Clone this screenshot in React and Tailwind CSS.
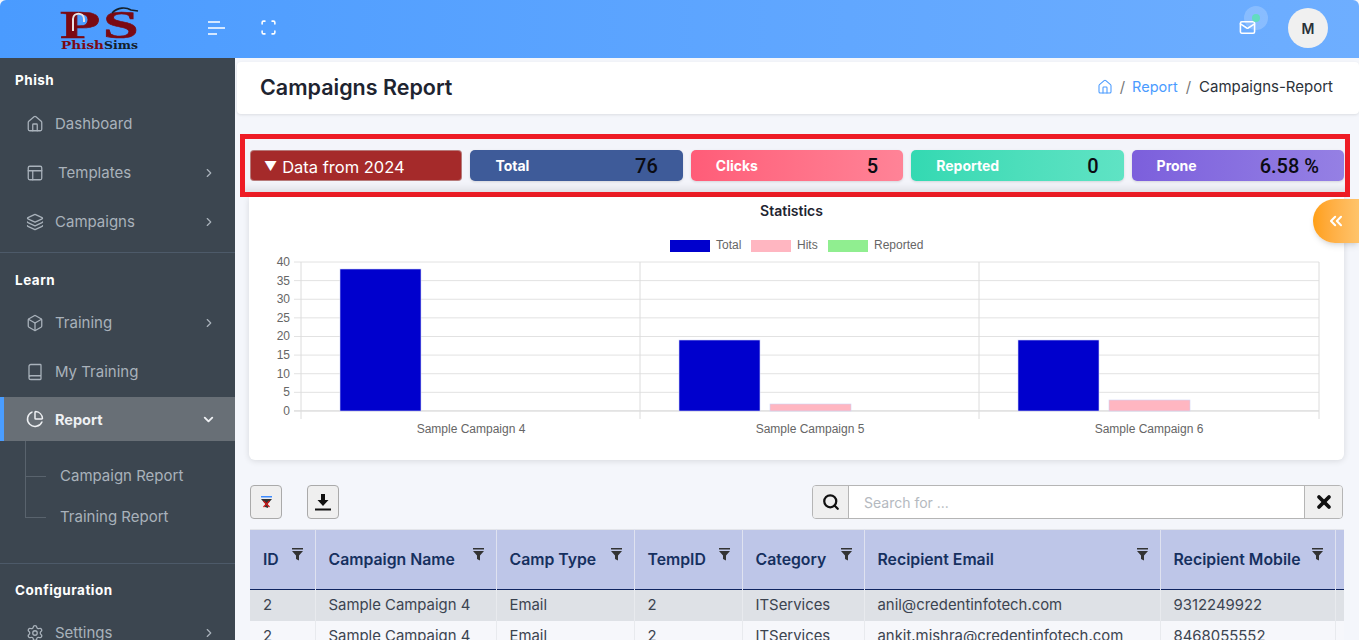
import {
  Home,
  PanelsTopLeft,
  Layers,
  Box,
  Book,
  ChartPie,
  ChevronRight,
  ChevronDown,
  Settings,
  Mail,
  Scan,
  Search,
  X,
  ChevronsLeft,
} from 'lucide-react';

const font = "font-['Inter','Noto_Sans',sans-serif]";

const rows = [
  ['2', 'Sample Campaign 4', 'Email', '2', 'ITServices', 'anil@credentinfotech.com', '9312249922'],
  ['2', 'Sample Campaign 4', 'Email', '2', 'ITServices', 'ankit.mishra@credentinfotech.com', '8468055552'],
];

const columns = [
  ['ID', 'w-[65px]'],
  ['Campaign Name', 'w-[181px]'],
  ['Camp Type', 'w-[138px]'],
  ['TempID', 'w-[108px]'],
  ['Category', 'w-[122px]'],
  ['Recipient Email', 'w-[296px]'],
  ['Recipient Mobile', 'w-[175px]'],
];

const FilterIcon = () => (
  <svg width="11" height="13" viewBox="0 0 11 13" className="absolute right-[12px] top-[18px]">
    <rect x="0" y="0" width="11" height="1.5" fill="#333" />
    <path d="M0 3h11L7 7.500V12.500L4 11V7.500Z" fill="#333" />
  </svg>
);

const Logo = () => (
  <svg width="80" height="44" viewBox="0 0 80 44">
    <text transform="translate(0 31) scale(1.65 1)" fontFamily="Liberation Serif" fontWeight="700" fontSize="40" fill="#7b0a12" stroke="#7b0a12" strokeWidth="0.6">P</text>
    <text transform="translate(43 31) scale(1.6 1)" fontFamily="Liberation Serif" fontWeight="700" fontSize="40" fill="#7b0a12" stroke="#7b0a12" strokeWidth="0.6">S</text>
    <path d="M13 24V12c0-7 11-7 11 0v3" fill="none" stroke="#e9e4e4" strokeWidth="2" />
    <path d="M52 6c6-6 14-6 19-3l7 1" fill="none" stroke="#14202c" strokeWidth="1.600" />
    <text x="1" y="42" fontFamily="DejaVu Serif" fontWeight="700" fontSize="11" fill="#7b0a12" textLength="43" lengthAdjust="spacingAndGlyphs">Phish</text>
    <text x="44" y="42" fontFamily="DejaVu Serif" fontWeight="700" fontSize="11" fill="#14202c" textLength="34" lengthAdjust="spacingAndGlyphs">Sims</text>
  </svg>
);

const SideLabel = ({ children, className }) => (
  <div className={`h-[20px] pl-[15px] text-[13.5px] leading-[20px] font-bold tracking-[0.5px] text-white ${className}`}>{children}</div>
);

const SideItem = ({ icon: Icon, label, arrow, indent }) => (
  <div className="flex h-[49px] items-center pl-[26px] pr-[19px] text-[#a9b2bb]">
    <Icon size={18} strokeWidth={1.7} className="shrink-0" />
    <span className={`${indent ? 'ml-[14px]' : 'ml-[11px]'} pt-[1px] text-[15px]`}>{label}</span>
    {arrow && <ChevronRight size={14} className="ml-auto" />}
  </div>
);

const Sidebar = () => (
  <aside className="h-[582px] w-[235px] shrink-0 overflow-hidden bg-[#3c4650]">
    <div className="pt-[12px]">
      <SideLabel className="mb-[9px]">Phish</SideLabel>
      <SideItem icon={Home} label="Dashboard" />
      <SideItem icon={PanelsTopLeft} label="Templates" arrow indent />
      <SideItem icon={Layers} label="Campaigns" arrow />
    </div>
    <div className="mt-[6px] border-t border-[#4d5a69] pt-[17px]">
      <SideLabel className="mb-[8px]">Learn</SideLabel>
      <SideItem icon={Box} label="Training" arrow />
      <SideItem icon={Book} label="My Training" />
      <div className="mt-[1px] flex h-[44px] items-center border-l-4 border-[#4a9dff] bg-[#686f76] pl-[22px] pr-[19px] text-[#eef0f3]">
        <ChartPie size={18} strokeWidth={2} />
        <span className="ml-[11px] pt-[2px] text-[14.5px] font-bold">Report</span>
        <ChevronDown size={15} strokeWidth={3} className="ml-auto" />
      </div>
      <div className="relative h-[122px] pt-[15px] text-[15px] text-[#a9b2bb]">
        <span className="absolute left-[25px] top-0 h-[76px] w-[1px] bg-[#59636d]" />
        <span className="absolute left-[25px] top-[35px] h-[1px] w-[21px] bg-[#59636d]" />
        <span className="absolute left-[25px] top-[76px] h-[1px] w-[21px] bg-[#59636d]" />
        <div className="flex h-[41px] items-center pl-[60px]">Campaign Report</div>
        <div className="flex h-[41px] items-center pl-[60px]">Training Report</div>
      </div>
    </div>
    <div className="border-t border-[#4d5a69] pt-[16px]">
      <SideLabel className="mb-[8px]">Configuration</SideLabel>
      <SideItem icon={Settings} label="Settings" arrow />
    </div>
  </aside>
);

const Topbar = () => (
  <header className="flex h-[58px] items-center overflow-hidden rounded-t-[6px] bg-gradient-to-r from-[#4a9bff] to-[#6eaeff]">
    <div className="ml-[60px] flex h-[58px] w-[80px] items-center">
      <Logo />
    </div>
    <svg width="18" height="14" viewBox="0 0 18 14" className="mb-[2px] ml-[68px]" fill="none" stroke="#fff" strokeWidth="1.600">
      <path d="M0 1h12M0 7h17M0 13h9" />
    </svg>
    <Scan size={17} color="#fff" strokeWidth={2.2} className="mb-[3px] ml-[34px]" />
    <div className="relative mb-[2px] ml-auto mr-[31px] flex items-start">
      <span className="absolute left-[5px] top-[-2px] h-[24px] w-[24px] rounded-full bg-white/20" />
      <span className="absolute left-[13px] top-[6px] h-[8px] w-[8px] rounded-full bg-[#62dcc0]" />
      <Mail size={17} color="#fff" strokeWidth={2.2} className="mt-[11px]" />
      <div className="ml-[32px] flex h-[40px] w-[40px] items-center justify-center rounded-full bg-[#f0f0f0] text-[14px] font-semibold text-[#2a3038]">M</div>
    </div>
  </header>
);

const Stat = ({ label, value, gradient }) => (
  <div className={`flex h-[31px] items-center justify-between rounded-[5px] pl-[25px] pr-[25px] shadow-sm ${gradient}`}>
    <span className="text-[14px] font-bold text-white">{label}</span>
    <span className="font-['Roboto',sans-serif] text-[20px] font-medium text-[#0b0b12]">{value}</span>
  </div>
);

const StatsBar = () => (
  <div className="h-[63px] border-[5px] border-[#ee1c25] bg-[#f3f4fa] pl-[5px] pr-[1px] pt-[11px] shadow-[inset_0_-10px_10px_-8px_rgba(0,0,0,0.12)]">
    <div className="grid grid-cols-5 gap-[8px]">
      <div className="flex h-[31px] items-center rounded-[4px] border border-[#c9c9c9]/50 bg-[#a52a2a] pl-[13px] pt-[3px] text-[16.5px] text-white">
        <span className="mr-[5px] text-[13px]">▼</span>Data from 2024
      </div>
      <Stat label="Total" value="76" gradient="bg-[#3e5b99]" />
      <Stat label="Clicks" value="5" gradient="bg-gradient-to-r from-[#ff5c78] to-[#ff8397]" />
      <Stat label="Reported" value="0" gradient="bg-gradient-to-r from-[#33d9b2] to-[#5fe3c4]" />
      <Stat label="Prone" value="6.58 %" gradient="bg-gradient-to-r from-[#7c5fdc] to-[#9580e4]" />
    </div>
  </div>
);

const ChartBar = ({ x, top, fill }) => (
  <rect x={x} y={top} width="81" height={411 - top} fill={fill} stroke="#cfd3f5" strokeWidth="0.6" />
);

const Chart = () => {
  const ticks = [40, 35, 30, 25, 20, 15, 10, 5, 0];
  return (
    <div className="ml-[9px] mr-[6px] h-[263px] rounded-b-[6px] bg-white shadow-[0_1px_6px_rgba(0,0,0,0.12)]">
      <div className="h-[25px] pr-[10px] pt-[4px] text-center text-[14px] font-semibold leading-[20px] text-[#1e2430]">Statistics</div>
      <svg width="1095" height="238" viewBox="249 222 1095 238" className="block">
        <g fontFamily="Liberation Sans" fontSize="12" fill="#666">
          <rect x="670" y="240" width="40" height="12" fill="#0000cd" />
          <text x="716" y="249">Total</text>
          <rect x="751" y="240" width="40" height="12" fill="#ffb6c1" />
          <text x="797" y="249">Hits</text>
          <rect x="828" y="240" width="40" height="12" fill="#90ee90" />
          <text x="874" y="249">Reported</text>
          {ticks.map((t, i) => {
            const y = 262 + i * 18.62;
            return (
              <g key={t}>
                <line x1="294" x2="1319" y1={y} y2={y} stroke={t === 0 ? '#ccc' : '#e2e2e2'} />
                <text x="290" y={y + 4} textAnchor="end" fontSize="12">{t}</text>
              </g>
            );
          })}
          {[301, 640, 979, 1319].map((x) => (
            <line key={x} x1={x} x2={x} y1="262" y2="419" stroke="#dcdcdc" />
          ))}
          <ChartBar x={340} top={269} fill="#0000cd" />
          <ChartBar x={679} top={340} fill="#0000cd" />
          <ChartBar x={770} top={404} fill="#ffb6c1" />
          <ChartBar x={1018} top={340} fill="#0000cd" />
          <ChartBar x={1109} top={400} fill="#ffb6c1" />
          <text x="471" y="433" textAnchor="middle">Sample Campaign 4</text>
          <text x="810" y="433" textAnchor="middle">Sample Campaign 5</text>
          <text x="1149" y="433" textAnchor="middle">Sample Campaign 6</text>
        </g>
      </svg>
    </div>
  );
};

const Toolbar = () => (
  <div className="ml-[10px] mr-[16px] mt-[25px] flex h-[34px] items-center">
    <button className="flex h-[34px] w-[32px] items-center justify-center rounded-[4px] border border-[#aaa] bg-[#efefef]">
      <svg width="11" height="13" viewBox="0 0 11 13">
        <rect x="0" y="0" width="11" height="1.5" fill="#3d8bff" />
        <path d="M0 3h11L7 7.500V12L4 11V7.500Z" fill="#333" />
        <path d="M2.500 5l6 6M8.500 5l-6 6" stroke="#d01b1b" strokeWidth="1.4" />
      </svg>
    </button>
    <button className="ml-[25px] flex h-[34px] w-[32px] items-center justify-center rounded-[4px] border border-[#aaa] bg-[#efefef]">
      <svg width="16" height="17" viewBox="0 0 16 17" fill="#111">
        <path d="M6 0h4v6h3.500L8 12 2.500 6H6Z" />
        <rect y="14.500" width="16" height="2" />
      </svg>
    </button>
    <div className="ml-auto flex h-[34px] w-[531px] overflow-hidden rounded-[4px] border border-[#b5b5b5]">
      <div className="flex w-[36px] items-center justify-center border-r border-[#b5b5b5] bg-[#efefef]">
        <Search size={18} strokeWidth={3} color="#111" />
      </div>
      <div className="flex flex-1 items-center bg-white pl-[15px] text-[14px] text-[#b4b9c0]">Search for ...</div>
      <div className="flex w-[38px] items-center justify-center border-l border-[#b5b5b5] bg-[#efefef]">
        <X size={20} strokeWidth={4.5} color="#111" />
      </div>
    </div>
  </div>
);

const ReportTable = () => (
  <table className="ml-[10px] mt-[10px] w-[1094px] table-fixed border-collapse">
    <thead>
      <tr className="h-[60px] border-b border-t border-b-[#0f2460] border-t-[#e3e5ea] bg-[#bec6e8]">
        {columns.map(([name, width]) => (
          <th key={name} className={`relative border-r border-[#dfe2f0] pl-[13px] text-left text-[15.8px] font-semibold text-[#16305f] ${width}`}>
            {name}
            <FilterIcon />
          </th>
        ))}
        <th />
      </tr>
    </thead>
    <tbody>
      {rows.map((row, i) => (
        <tr key={row[5]} className={`h-[31px] ${i === 0 ? 'bg-[#dee1e6]' : 'bg-[#f6f7fb]'}`}>
          {row.map((cell, j) => (
            <td key={j} className="truncate border-r border-[#e8eaee] pl-[13px] text-[14.9px] text-[#3c4450]">{cell}</td>
          ))}
          <td />
        </tr>
      ))}
    </tbody>
  </table>
);

const App = () => (
  <div className={`relative h-[640px] w-[1359px] overflow-hidden bg-[#f4f6fb] ${font}`}>
    <Topbar />
    <div className="flex">
      <Sidebar />
      <main className="min-w-0 flex-1">
        <div className="ml-[2px] mt-[4px] flex h-[52px] items-center justify-between rounded-[4px] bg-white pl-[23px] pr-[26px] shadow-[0_1px_3px_rgba(0,0,0,0.1)]">
          <h1 className="pb-[2px] text-[21.5px] font-semibold text-[#1e2430]">Campaigns Report</h1>
          <div className="flex items-center pb-[2px] text-[15px]">
            <Home size={16} color="#4a9bff" strokeWidth={1.6} />
            <span className="mx-[7px] text-[#777]">/</span>
            <span className="text-[14.5px] text-[#4a9bff]">Report</span>
            <span className="mx-[8px] text-[#777]">/</span>
            <span className="text-[#2c323a]">Campaigns-Report</span>
          </div>
        </div>
        <div className="ml-[5px] mr-[9px] mt-[20px]">
          <StatsBar />
          <Chart />
        </div>
        <div className="ml-[5px]">
          <Toolbar />
          <ReportTable />
        </div>
      </main>
    </div>
    <div className="absolute right-0 top-[199px] flex h-[44px] w-[46px] items-center justify-center rounded-l-full bg-gradient-to-r from-[#ff9f12] to-[#ffc46b] shadow-md">
      <ChevronsLeft size={20} color="#fff" strokeWidth={2.5} />
    </div>
  </div>
);

export default App;
